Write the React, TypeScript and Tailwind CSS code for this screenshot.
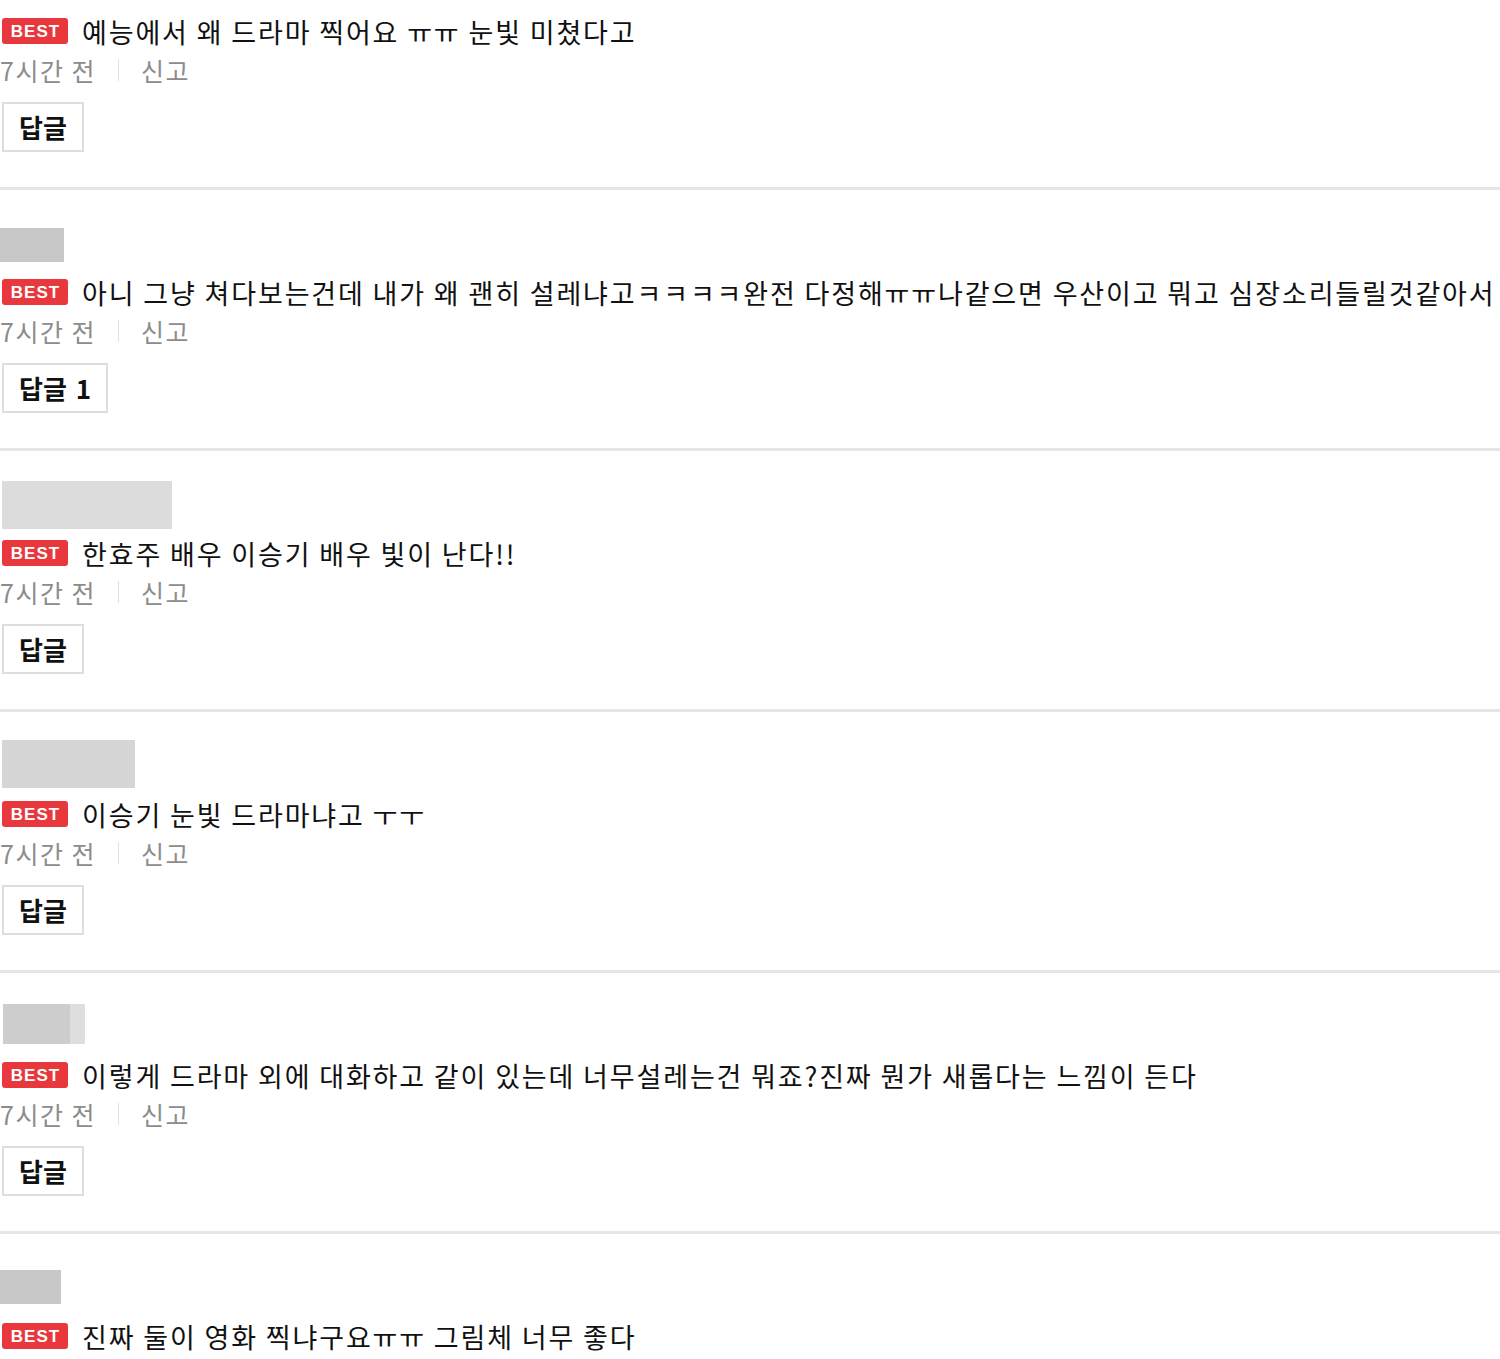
import React from "react";

interface Comment {
  text: string;
  replies?: number;
  // redacted nickname box above the comment
  nick?: { top: string; w: string; h: string; bg: string; split?: boolean };
  cut?: boolean; // last item is cut off by the viewport
}

const comments: Comment[] = [
  { text: "예능에서 왜 드라마 찍어요 ㅠㅠ 눈빛 미쳤다고" },
  {
    text: "아니 그냥 쳐다보는건데 내가 왜 괜히 설레냐고ㅋㅋㅋㅋ완전 다정해ㅠㅠ나같으면 우산이고 뭐고 심장소리들릴것같아서",
    replies: 1,
    nick: { top: "mt-[38px]", w: "w-[64px]", h: "h-[34px]", bg: "bg-[#c8c8c8]" },
  },
  {
    text: "한효주 배우 이승기 배우 빛이 난다!!",
    nick: { top: "mt-[30px] ml-[2px]", w: "w-[170px]", h: "h-[48px]", bg: "bg-[#dcdcdc]" },
  },
  {
    text: "이승기 눈빛 드라마냐고 ㅜㅜ",
    nick: { top: "mt-[28px] ml-[2px]", w: "w-[133px]", h: "h-[48px]", bg: "bg-[#d6d6d6]" },
  },
  {
    text: "이렇게 드라마 외에 대화하고 같이 있는데 너무설레는건 뭐죠?진짜 뭔가 새롭다는 느낌이 든다",
    nick: { top: "mt-[31px] ml-[3px]", w: "w-[82px]", h: "h-[40px]", bg: "bg-[#cdcdcd]", split: true },
  },
  {
    text: "진짜 둘이 영화 찍냐구요ㅠㅠ 그림체 너무 좋다",
    nick: { top: "mt-[36px]", w: "w-[61px]", h: "h-[34px]", bg: "bg-[#c8c8c8]" },
    cut: true,
  },
];

function BestBadge() {
  return (
    <span className="flex h-[26px] w-[66px] shrink-0 items-center justify-center rounded-[3px] bg-[#e8383d] pl-px text-[17px] font-bold leading-none tracking-[1px] text-white font-['Liberation_Sans',sans-serif]">
      BEST
    </span>
  );
}

function CommentItem({ c, first }: { c: Comment; first: boolean }) {
  return (
    <li className="flex flex-col">
      {first ? (
        <div className="h-[13px]" />
      ) : (
        <div className="h-[84px]">
          {c.nick && (
            <div className={`flex ${c.nick.top} ${c.nick.w} ${c.nick.h} ${c.nick.bg}`}>
              {c.nick.split && <div className="ml-auto h-full w-[15px] bg-[#dedede]" />}
            </div>
          )}
        </div>
      )}
      <div className="flex h-[36px] items-center pl-[2px]">
        <BestBadge />
        <p className="ml-[14px] whitespace-nowrap text-[27px] leading-none tracking-[1.85px] text-[#111]">
          {c.text}
        </p>
      </div>
      {!c.cut && (
        <>
          <div className="mt-[6px] flex h-[30px] items-center text-[25px] leading-none tracking-[1.5px] text-[#8c8c8c]">
            <span>7시간 전</span>
            <span className="mx-[22px] h-[22px] w-px bg-[#e2e2e2]" />
            <span>신고</span>
          </div>
          <div className="mt-[17px] pl-[2px]">
            <button className="flex h-[50px] items-center border-2 border-[#dedede] bg-white px-[15px] text-[26px] font-bold leading-none text-[#111]">
              답글{c.replies ? <span className="ml-[9px]">{c.replies}</span> : null}
            </button>
          </div>
          <div className="mt-[35px] h-[3px] bg-[#e6e6e6]" />
        </>
      )}
    </li>
  );
}

export default function App() {
  return (
    <div className="h-[1359px] w-[1500px] overflow-hidden bg-white font-['Noto_Sans_CJK_KR',sans-serif]">
      <ul className="flex flex-col">
        {comments.map((c, i) => (
          <CommentItem key={i} c={c} first={i === 0} />
        ))}
      </ul>
    </div>
  );
}
